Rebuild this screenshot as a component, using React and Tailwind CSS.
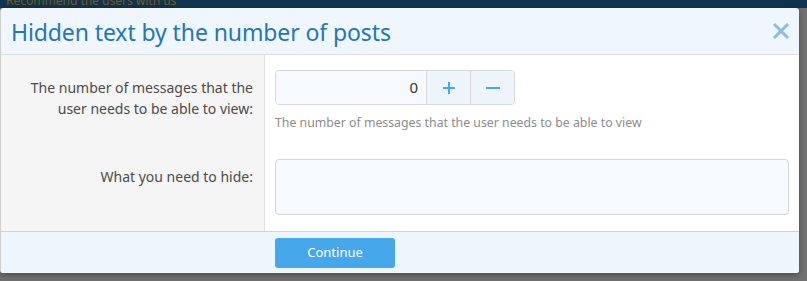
import { useState } from 'react'

export default function App() {
  const [count, setCount] = useState(0)
  const [hidden, setHidden] = useState('')

  return (
    <div
      className="w-[807px] h-[281px] bg-[#717171] overflow-hidden"
      style={{ fontFamily: '"Noto Sans", "Open Sans", sans-serif' }}
    >
      {/* dimmed page behind the overlay */}
      <div className="h-[8px] bg-[#10344f] overflow-hidden">
        <div className="pl-[6px] text-[12px] leading-[12px] text-[#7a5a1c] -mt-[5px]">
          Recommend the users with us
        </div>
      </div>

      <div className="w-[799px] h-[265px] bg-white rounded-t-[4px] rounded-b-[3px] border-l border-[#cfcfcf] shadow-[0_2px_6px_rgba(0,0,0,0.35)] flex flex-col overflow-hidden">
        {/* header */}
        <div className="h-[47px] flex items-center justify-between bg-[#f0f6fd] border-b border-[#dadde0] pl-[10px] pr-[9px]">
          <h2 className="text-[23px] text-[#2577b1] tracking-[-0.1px] pt-[2px]">Hidden text by the number of posts</h2>
          <button className="text-[#8cbddf] w-[18px] h-[18px] flex items-center justify-center">
            <svg width="16" height="16" viewBox="0 0 16 16">
              <path d="M2 2 L14 14 M14 2 L2 14" stroke="currentColor" strokeWidth="3" strokeLinecap="square" />
            </svg>
          </button>
        </div>

        {/* body */}
        <div className="flex flex-1">
          <div className="w-[264px] bg-[#f5f5f5] border-r border-[#e1e1e1] text-right text-[14px] text-[#4b4b4b] pr-[11px]">
            <div className="pt-[22px] leading-[21px]">
              The number of messages that the
              <br />
              user needs to be able to view:
            </div>
            <div className="mt-[47px] leading-[21px]">What you need to hide:</div>
          </div>

          <div className="flex-1 pl-[10px] pr-[10px] pt-[15px]">
            <div className="flex w-[240px] h-[35px] border border-[#d8d8d8] rounded-[4px] overflow-hidden">
              <input
                value={count}
                onChange={(e) => setCount(e.target.value)}
                className="w-[150px] bg-[#f6f9fd] text-right pr-[8px] text-[15px] text-[#333] outline-none"
              />
              <button
                onClick={() => setCount(Number(count) + 1)}
                className="w-[44px] bg-[#edf4fc] border-l border-[#d8d8d8] flex items-center justify-center text-[#47a7eb]"
              >
                <svg width="12" height="12" viewBox="0 0 12 12">
                  <path d="M6 0 V12 M0 6 H12" stroke="currentColor" strokeWidth="2" />
                </svg>
              </button>
              <button
                onClick={() => setCount(Math.max(0, Number(count) - 1))}
                className="flex-1 bg-[#edf4fc] border-l border-[#d8d8d8] flex items-center justify-center text-[#47a7eb]"
              >
                <svg width="14" height="12" viewBox="0 0 14 12">
                  <path d="M0 6 H14" stroke="currentColor" strokeWidth="2" />
                </svg>
              </button>
            </div>
            <div className="mt-[9px] text-[12.3px] text-[#8c8c8c]">
              The number of messages that the user needs to be able to view
            </div>
            <textarea
              value={hidden}
              onChange={(e) => setHidden(e.target.value)}
              className="mt-[27px] w-full h-[56px] block bg-[#f6f9fd] border border-[#d5d5d5] rounded-[4px] resize-none outline-none"
            />
          </div>
        </div>

        {/* footer */}
        <div className="h-[42px] bg-[#edf5fd] border-t border-[#d3d3d3] flex items-center pl-[274px]">
          <button className="w-[120px] h-[30px] bg-[#47a7eb] rounded-[3px] text-white text-[13px]">Continue</button>
        </div>
      </div>
    </div>
  )
}
